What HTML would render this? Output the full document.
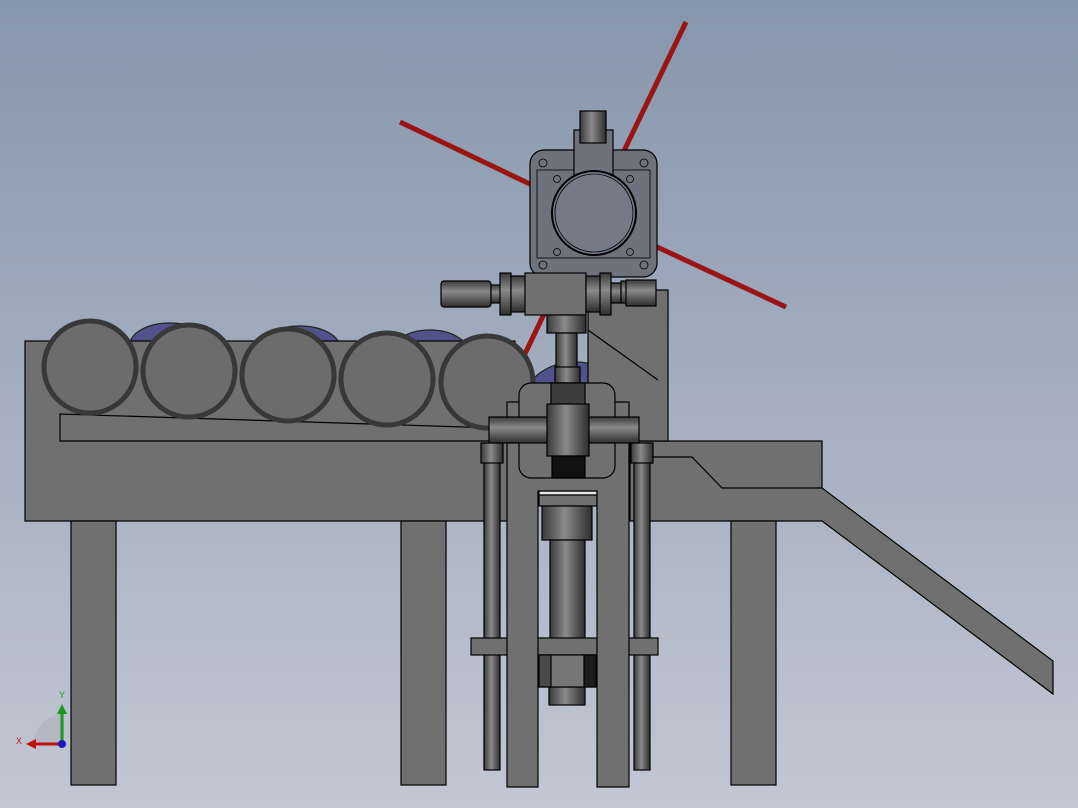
<!DOCTYPE html>
<html><head><style>
html,body{margin:0;padding:0;width:1078px;height:808px;overflow:hidden}
svg{display:block}
</style></head><body>
<svg width="1078" height="808" viewBox="0 0 1078 808" xmlns="http://www.w3.org/2000/svg">
<defs>
<linearGradient id="bg" x1="0" y1="0" x2="0" y2="1">
<stop offset="0" stop-color="#8696ac"/><stop offset="1" stop-color="#c3c7d3"/>
</linearGradient>
<linearGradient id="cylV" x1="0" y1="0" x2="1" y2="0">
<stop offset="0" stop-color="#3a3a3a"/><stop offset="0.45" stop-color="#8a8a8a"/><stop offset="1" stop-color="#2e2e2e"/>
</linearGradient>
<linearGradient id="cylH" x1="0" y1="0" x2="0" y2="1">
<stop offset="0" stop-color="#3a3a3a"/><stop offset="0.4" stop-color="#8a8a8a"/><stop offset="1" stop-color="#2e2e2e"/>
</linearGradient>
</defs>
<rect width="1078" height="808" fill="url(#bg)"/>
<g stroke="#000" stroke-width="1.2" fill="#707070">
<g stroke-width="5" stroke-linecap="butt" stroke="#9a1414">
<line x1="400" y1="122" x2="532" y2="185"/>
<line x1="686" y1="22" x2="622" y2="155"/>
<line x1="655" y1="246" x2="786" y2="307"/>
<line x1="545" y1="312" x2="522" y2="360"/>
</g>
<g fill="#52528a" stroke="#222">
<ellipse cx="170" cy="345" rx="40" ry="22"/>
<ellipse cx="300" cy="348" rx="40" ry="22"/>
<ellipse cx="430" cy="355" rx="40" ry="25"/>
<ellipse cx="575" cy="400" rx="50" ry="38"/>
</g>
<rect x="25" y="341" width="490" height="180"/>
<rect x="71" y="521" width="45" height="264"/>
<rect x="401" y="521" width="45" height="264"/>
<polygon points="60,414 495,428 495,441 60,441"/>
<g fill="#6c6c6c">
<circle cx="90" cy="367" r="46" stroke-width="5" stroke="#383838"/>
<circle cx="189" cy="371" r="46" stroke-width="5" stroke="#383838"/>
<circle cx="288" cy="375" r="46" stroke-width="5" stroke="#383838"/>
<circle cx="387" cy="379" r="46" stroke-width="5" stroke="#383838"/>
<circle cx="487" cy="382" r="46" stroke-width="5" stroke="#383838"/>
</g>
<polygon points="630,441 822,441 822,488 1053,661 1053,694 822,521 630,521"/>
<polyline points="653,457 692,457 722,488 822,488" fill="none"/>
<rect x="731" y="521" width="45" height="264"/>
<polygon points="588,290 668,290 668,441 588,441"/>
<line x1="588" y1="330" x2="658" y2="380"/>
<rect x="530" y="150" width="127" height="127" rx="14" fill="#6e727c"/>
<rect x="537" y="170" width="113" height="88" fill="none" stroke-width="0.8"/>
<rect x="574" y="130" width="39" height="45" fill="#6e727c"/>
<rect x="580" y="111" width="26" height="32" fill="url(#cylV)"/>
<circle cx="594" cy="213" r="42" fill="#747a86" stroke-width="2"/>
<circle cx="594" cy="213" r="39" fill="none" stroke-width="0.8"/>
<g fill="none" stroke-width="0.8">
<circle cx="543" cy="163" r="4"/><circle cx="644" cy="163" r="4"/>
<circle cx="543" cy="265" r="4"/><circle cx="644" cy="265" r="4"/>
<circle cx="557" cy="179" r="3.5"/><circle cx="630" cy="179" r="3.5"/>
<circle cx="557" cy="252" r="3.5"/><circle cx="630" cy="252" r="3.5"/>
</g>
<rect x="441" y="281" width="50" height="26" rx="3" fill="url(#cylH)"/>
<rect x="491" y="285" width="10" height="18" fill="url(#cylH)"/>
<rect x="500" y="273" width="11" height="42" fill="url(#cylH)"/>
<rect x="511" y="276" width="15" height="36" fill="url(#cylH)"/>
<rect x="525" y="273" width="61" height="42" fill="#707070"/>
<rect x="586" y="276" width="15" height="36" fill="url(#cylH)"/>
<rect x="600" y="273" width="11" height="42" fill="url(#cylH)"/>
<rect x="611" y="283" width="10" height="20" fill="url(#cylH)"/>
<rect x="621" y="281" width="10" height="22" fill="url(#cylH)"/>
<rect x="626" y="280" width="30" height="26" fill="url(#cylH)"/>
<rect x="547" y="315" width="39" height="18" fill="url(#cylV)"/>
<rect x="556" y="333" width="21" height="35" fill="url(#cylV)"/>
<rect x="555" y="367" width="25" height="16" fill="url(#cylV)"/>
<rect x="484" y="443" width="16" height="327" fill="url(#cylV)"/>
<rect x="481" y="443" width="22" height="20" fill="url(#cylV)"/>
<rect x="634" y="443" width="16" height="327" fill="url(#cylV)"/>
<rect x="631" y="443" width="22" height="20" fill="url(#cylV)"/>
<!-- cylinder -->
<rect x="539" y="491" width="58" height="4" fill="#e8e8e8"/>
<rect x="539" y="495" width="58" height="11"/>
<rect x="542" y="506" width="50" height="34" fill="url(#cylV)"/>
<rect x="550" y="540" width="35" height="120" fill="url(#cylV)"/>
<rect x="549" y="687" width="36" height="18" fill="url(#cylV)"/>
<rect x="471" y="638" width="187" height="17"/>
<rect x="539" y="655" width="57" height="32" fill="#777"/>
<rect x="539" y="655" width="12" height="32" fill="#4a4a4a"/>
<rect x="584" y="655" width="12" height="32" fill="#1c1c1c"/>
<!-- U frame -->
<path d="M507,402 H629 V787 H597 V491 H538 V787 H507 Z"/>
<rect x="519" y="383" width="96" height="95" rx="12"/>
<rect x="551" y="383" width="34" height="24" fill="#3e3e3e"/>
<rect x="489" y="417" width="150" height="26" fill="url(#cylH)"/>
<rect x="547" y="404" width="42" height="52" fill="url(#cylV)"/>
<rect x="552" y="456" width="33" height="22" fill="#111"/>
</g>
<g>
<path d="M34,744 A30,30 0 0 1 64,714 V744 Z" fill="#b4b8c2"/>
<line x1="62" y1="744" x2="62" y2="712" stroke="#1a9a1a" stroke-width="3"/>
<polygon points="57,714 62,704 67,714" fill="#1a9a1a"/>
<line x1="62" y1="744" x2="34" y2="744" stroke="#c01010" stroke-width="3"/>
<polygon points="36,739 26,744 36,749" fill="#c01010"/>
<circle cx="62" cy="744" r="4" fill="#1a1ac0"/>
<text x="59" y="698" font-family="Liberation Sans, sans-serif" font-size="9" fill="#1a9a1a">Y</text>
<text x="16" y="744" font-family="Liberation Sans, sans-serif" font-size="9" fill="#c01010">X</text>
</g>
</svg>
</body></html>
